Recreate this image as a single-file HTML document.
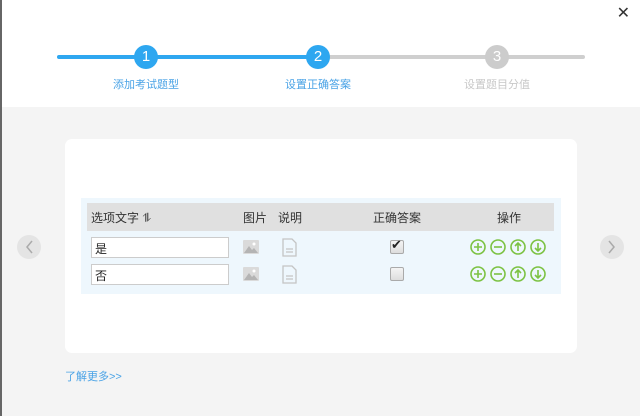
<!DOCTYPE html>
<html><head><meta charset="utf-8"><style>
*{margin:0;padding:0;box-sizing:border-box}
body{width:640px;height:416px;overflow:hidden;background:#f4f4f4;font-family:"Liberation Sans","Noto Sans CJK SC",sans-serif;position:relative}
.abs{position:absolute}
.top{left:0;top:0;width:640px;height:107px;background:#fff}
.lb{left:0;top:0;width:2px;height:416px;background:#666}
.step{width:24px;height:24px;border-radius:50%;color:#fff;font-size:15px;text-align:center;line-height:24px}
.lbl{font-size:11px;width:120px;text-align:center}
.card{left:65px;top:139px;width:512px;height:214px;background:#fff;border-radius:7px}
.tbl{left:81px;top:198px;width:480px;height:96px;background:#eef7fd}
.hd{left:87px;top:203px;width:467px;height:28px;background:#e0e0e0;font-size:12px;color:#333}
.hd span{position:absolute;top:6px}
.inp{width:138px;height:21px;border:1px solid #ccc;background:#fff;font-size:12px;padding:2px 0 0 3px;color:#222}
.cb{width:14px;height:14px;border:1px solid #aaa;border-radius:2px;background:linear-gradient(#f4f4f4,#ddd)}
.nav{width:24px;height:24px;border-radius:50%;background:#e4e4e4}
</style></head><body>
<div class="abs top"></div>
<div class="abs lb"></div>
<div class="abs" style="right:10px;top:3px;font-size:16px;color:#333">✕</div>
<div class="abs" style="left:57px;top:55px;width:261px;height:4px;background:#2ea7f0;border-radius:2px"></div>
<div class="abs" style="left:318px;top:55px;width:267px;height:4px;background:#cfcfcf;border-radius:2px"></div>
<div class="abs step" style="left:134px;top:45px;background:#2ea7f0">1</div>
<div class="abs step" style="left:306px;top:45px;background:#2ea7f0">2</div>
<div class="abs step" style="left:485px;top:45px;background:#ccc">3</div>
<div class="abs lbl" style="left:86px;top:76px;color:#4aa3e6">添加考试题型</div>
<div class="abs lbl" style="left:258px;top:76px;color:#4aa3e6">设置正确答案</div>
<div class="abs lbl" style="left:437px;top:76px;color:#c8c8c8">设置题目分值</div>
<div class="abs card"></div>
<div class="abs tbl"></div>
<div class="abs hd"><span style="left:4px">选项文字 ⥮</span><span style="left:156px">图片</span><span style="left:191px">说明</span><span style="left:286px">正确答案</span><span style="left:410px">操作</span></div>
<div class="abs inp" style="left:91px;top:237px">是</div>
<div class="abs inp" style="left:91px;top:264px">否</div>
<div class="abs nav" style="left:17px;top:235px"></div>
<div class="abs nav" style="left:600px;top:235px"></div>
<svg class="abs" style="left:0;top:0" width="640" height="416">
<g id="im"><rect x="243" y="240" width="16" height="14" rx="1" fill="#dadada"/><path d="M244 253 L249 246 L252 250 L254 248 L258 253Z" fill="#b4b4b4"/><circle cx="254" cy="244" r="1.5" fill="#fff"/></g>
<use href="#im" y="27"/>
<g fill="none" stroke="#c4c4c4" stroke-width="1.3" id="dc"><path d="M283 239 h9 l4 4 v13 h-13z"/><path d="M286 249h7M286 252h7"/></g>
<use href="#dc" y="27"/>
<g fill="none" stroke="#7cc242" stroke-width="1.6" id="ops">
<circle cx="478" cy="247" r="7"/><path d="M474 247h8M478 243v8"/>
<circle cx="498" cy="247" r="7"/><path d="M494 247h8"/>
<circle cx="518" cy="247" r="7"/><path d="M518 251v-7M515 246l3-3 3 3"/>
<circle cx="538" cy="247" r="7"/><path d="M538 243v7M535 248l3 3 3-3"/>
</g>
<use href="#ops" y="27"/>
<path d="M32 241 l-5 6 5 6" fill="none" stroke="#aaa" stroke-width="1.5"/>
<path d="M609 241 l5 6 -5 6" fill="none" stroke="#aaa" stroke-width="1.5"/>
</svg>
<div class="abs cb" style="left:390px;top:240px"></div>
<div class="abs" style="left:391px;top:237px;font-size:13px;color:#222">✔</div>
<div class="abs cb" style="left:390px;top:267px"></div>
<div class="abs" style="left:65px;top:368px;font-size:11px;color:#4aa3e6">了解更多&gt;&gt;</div>
</body></html>
